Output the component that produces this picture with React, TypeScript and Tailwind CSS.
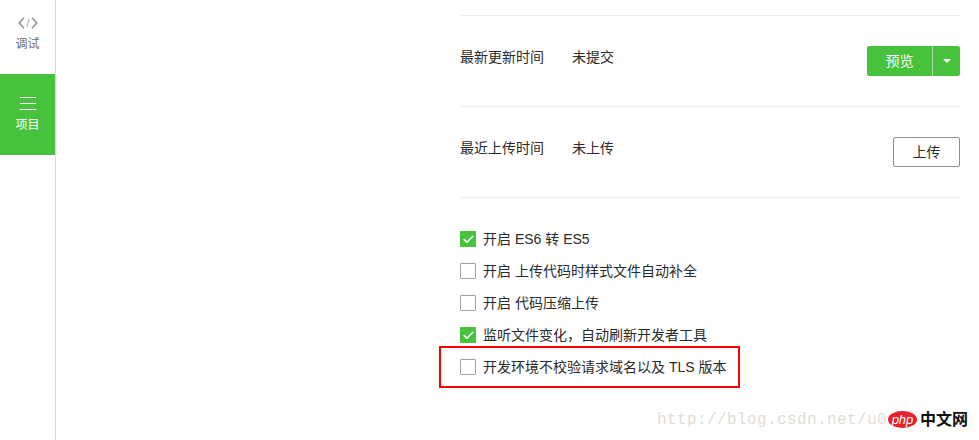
import { Check } from "lucide-react";

const cjk = "font-['Liberation_Sans','Noto_Sans_CJK_SC',sans-serif]";

function CheckRow({ checked, label }: { checked?: boolean; label: string }) {
  return (
    <div className="flex h-8 items-center gap-[7px]">
      {checked ? (
        <span className="flex h-4 w-4 items-center justify-center rounded-[1px] bg-[#48c23d]">
          <Check size={13} strokeWidth={3} className="text-white" />
        </span>
      ) : (
        <span className="h-4 w-4 rounded-[1px] border border-[#a3a3a3] bg-white" />
      )}
      <span className="text-[14px] leading-none text-[#2a2a2a]">{label}</span>
    </div>
  );
}

function InfoRow({ label, value, children }: { label: string; value: string; children: React.ReactNode }) {
  return (
    <div className="flex h-[91px] items-start justify-between border-b border-[#eeeeee] pt-[30px]">
      <div className="flex pt-[3px] text-[14px] leading-[17px] text-[#2a2a2a]">
        <span className="w-[112px]">{label}</span>
        <span>{value}</span>
      </div>
      {children}
    </div>
  );
}

export default function App() {
  return (
    <div className={`relative flex h-[440px] w-[979px] overflow-hidden bg-white ${cjk}`}>
      <aside className="h-full w-[56px] shrink-0 border-r border-[#d9d9d9] bg-white">
        <div className="flex h-[74px] flex-col items-center pt-[17px] text-[#6f6f6f]">
          <svg width="20" height="12" viewBox="0 0 20 12" fill="none" stroke="#8a8a8a" strokeWidth="1.4">
            <path d="M6 .8 1.2 6 6 11.2M14 .8 18.8 6 14 11.2" />
            <path d="M11 2 9 10" stroke="#b5b5b5" strokeWidth="1.1" />
          </svg>
          <span className="mt-[8px] text-[12px] leading-[14px]">调试</span>
        </div>
        <div className="flex h-[81px] flex-col items-center bg-[#48c23d] pt-[23px] text-white">
          <div className="flex w-4 flex-col gap-[5px]">
            <div className="h-px bg-white" />
            <div className="h-px bg-white" />
            <div className="h-px bg-white" />
          </div>
          <span className="mt-[8px] text-[12px] leading-[14px]">项目</span>
        </div>
      </aside>

      <main className="ml-[404px] w-[500px] pt-[15px]">
        <div className="border-t border-[#eeeeee]">
          <InfoRow label="最新更新时间" value="未提交">
            <div className="flex h-[30px] w-[93px] overflow-hidden rounded-[2px] bg-[#48c23d] text-white">
              <button className="w-[65px] text-[14px]">预览</button>
              <button className="flex flex-1 items-center justify-center border-l border-[#a5e09f]">
                <span className="h-0 w-0 border-x-[4px] border-t-[4px] border-x-transparent border-t-white" />
              </button>
            </div>
          </InfoRow>
          <InfoRow label="最近上传时间" value="未上传">
            <button className="h-[30px] w-[67px] rounded-[2px] border border-[#8f8f8f] text-[14px] text-[#2a2a2a]">
              上传
            </button>
          </InfoRow>
        </div>
        <div className="mt-[25px]">
          <CheckRow checked label="开启 ES6 转 ES5" />
          <CheckRow label="开启 上传代码时样式文件自动补全" />
          <CheckRow label="开启 代码压缩上传" />
          <CheckRow checked label="监听文件变化，自动刷新开发者工具" />
          <CheckRow label="开发环境不校验请求域名以及 TLS 版本" />
        </div>
      </main>

      {/* annotation drawn over the screenshot */}
      <div className="absolute left-[439px] top-[346px] h-[42px] w-[301px] border-2 border-[#ff0000]" />

      {/* watermark + site logo */}
      <span className="absolute left-[657px] top-[410px] font-['Liberation_Mono',monospace] text-[16px] leading-[20px] tracking-[0.4px] text-[#dfddd8]">
        http://blog.csdn.net/u0
      </span>
      <div className="absolute left-[888px] top-[411px] flex h-[17px] items-center gap-[3px]">
        <span className="flex h-[17px] w-[29px] items-center justify-center rounded-[50%] bg-[#e8222a] text-[13px] italic leading-none text-white">
          php
        </span>
        <span className="text-[16px] font-bold leading-none text-[#111]">中文网</span>
      </div>
    </div>
  );
}
